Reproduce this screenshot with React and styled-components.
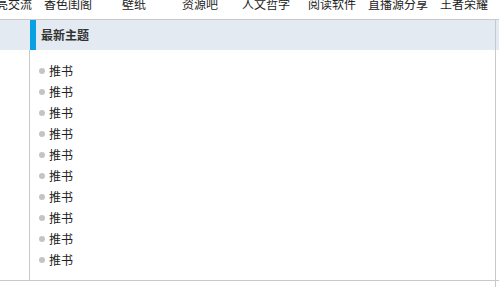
import styled, { createGlobalStyle } from "styled-components";

const GlobalStyle = createGlobalStyle`
body {
  margin: 0;
  background: #fff;
  font-family: "Microsoft YaHei", "Noto Sans CJK SC", "Noto Sans", sans-serif;
  color: #333;
}
`;

const navItems = ["图片亮交流", "香色闺阁", "壁纸", "资源吧", "人文哲学", "阅读软件", "直播源分享", "王者荣耀"];
const topics = ["推书", "推书", "推书", "推书", "推书", "推书", "推书", "推书", "推书", "推书"];

const Page = styled.div`
display: flex;
flex-direction: column;
width: 499px;
height: 287px;
overflow: hidden;
& > * {
  flex-shrink: 0;
}
`;

const Nav = styled.div`
display: flex;
justify-content: flex-end;
align-items: flex-end;
height: 19px;
padding-right: 2px;
overflow: hidden;
border-bottom: 1px solid #c9c9c9;
`;

const NavItem = styled.div`
flex: 0 0 66px;
height: 30px;
line-height: 30px;
text-align: center;
white-space: nowrap;
font-size: 12px;
color: #222;
`;

const Band = styled.div`
display: flex;
height: 30px;
padding-left: 30px;
background: #e4eaf1;
`;

const BandInner = styled.div`
width: 465px;
border-right: 1px solid #c9c9c9;
`;

const Title = styled.div`
height: 30px;
line-height: 30px;
border-left: 6px solid #0aa0e4;
padding-left: 5px;
font-size: 12px;
font-weight: bold;
color: #333;
`;

const Body = styled.div`
display: flex;
padding-left: 29px;
border-bottom: 1px solid #c9c9c9;
`;

const Panel = styled.ul`
list-style: none;
margin: 0;
width: 465px;
height: 210px;
padding: 10px 0;
border-left: 1px solid #c9c9c9;
border-right: 1px solid #c9c9c9;
`;

const Item = styled.li`
display: flex;
align-items: center;
gap: 4px;
height: 21px;
padding-left: 9px;
font-size: 12px;
color: #222;
`;

const Dot = styled.span`
width: 6px;
height: 6px;
border-radius: 50%;
background: #c4c4c4;
`;

const Tail = styled.div`
width: 495px;
height: 6px;
border-right: 1px solid #c9c9c9;
`;

export default function App() {
  return (
    <Page>
      <GlobalStyle />
      <Nav>
        {navItems.map((n, i) => (
          <NavItem key={i}>{n}</NavItem>
        ))}
      </Nav>
      <Band>
        <BandInner>
          <Title>最新主题</Title>
        </BandInner>
      </Band>
      <Body>
        <Panel>
          {topics.map((t, i) => (
            <Item key={i}>
              <Dot />
              {t}
            </Item>
          ))}
        </Panel>
      </Body>
      <Tail />
    </Page>
  );
}
